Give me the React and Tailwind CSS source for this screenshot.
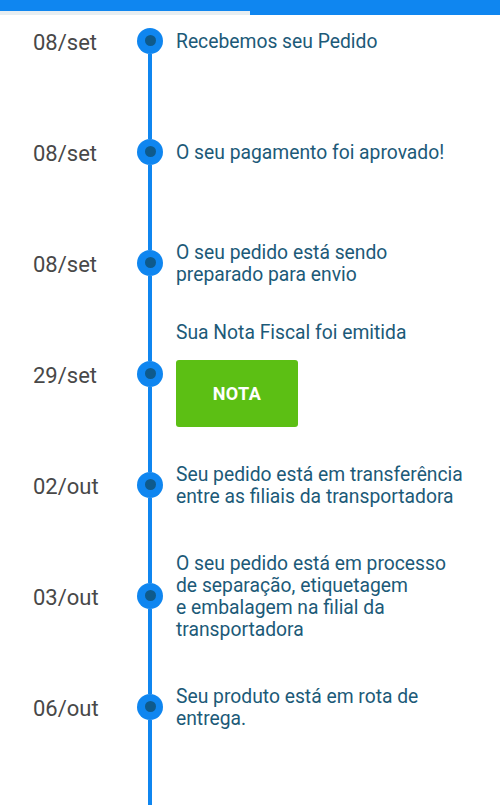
import React from "react";

const events = [
  { date: "08/set", lines: ["Recebemos seu Pedido"] },
  { date: "08/set", lines: ["O seu pagamento foi aprovado!"] },
  { date: "08/set", lines: ["O seu pedido está sendo", "preparado para envio"] },
  { date: "29/set", lines: ["Sua Nota Fiscal foi emitida"], button: "NOTA" },
  { date: "02/out", lines: ["Seu pedido está em transferência", "entre as filiais da transportadora"] },
  {
    date: "03/out",
    lines: ["O seu pedido está em processo", "de separação, etiquetagem", "e embalagem na filial da", "transportadora"],
  },
  { date: "06/out", lines: ["Seu produto está em rota de", "entrega."] },
];

const TimelineRow = ({ event, first }) => (
  <div className="flex h-[111px] items-stretch">
    <div className="w-[137px] pl-[33px] pt-[3px] flex items-center text-[22px] text-[#484848]">
      {event.date}
    </div>
    <div className="w-[26px] flex flex-col items-center">
      <div className={`flex-1 w-1 ${first ? "bg-transparent" : "bg-[#0f86f0]"}`} />
      <div className="w-[26px] h-[26px] rounded-full bg-[#0f86f0] flex items-center justify-center shrink-0">
        <div className="w-[11px] h-[11px] rounded-full bg-[#0e5a8c]" />
      </div>
      <div className="flex-1 w-1 bg-[#0f86f0]" />
    </div>
    <div className="flex-1 pl-[13px] pt-[2px] flex flex-col justify-center text-[19.3px] leading-[22px] text-[#1c5a78]">
      {event.lines.map((l, i) => (
        <div key={i}>{l}</div>
      ))}
      {event.button && (
        <button className="mt-4 w-[122px] h-[67px] rounded-[3px] bg-[#5cbf14] text-white font-bold text-[18px] tracking-wide">
          {event.button}
        </button>
      )}
    </div>
  </div>
);

const App = () => {
  return (
    <div className="w-[500px] h-[805px] overflow-hidden bg-white" style={{ fontFamily: "Roboto, sans-serif" }}>
      <div className="relative z-10">
        <div className="h-[11px] bg-[#0f86f0]" />
        <div className="flex h-1">
          <div className="w-[250px] bg-[#e8eef1]" />
          <div className="flex-1 bg-[#0f86f0]" />
        </div>
      </div>
      <div className="-mt-[30px]">
        {events.map((e, i) => (
          <TimelineRow key={i} event={e} first={i === 0} />
        ))}
        <div className="flex h-[111px]">
          <div className="w-[137px]" />
          <div className="w-[26px] flex justify-center">
            <div className="w-1 h-full bg-[#0f86f0]" />
          </div>
        </div>
      </div>
    </div>
  );
};

export default App;
